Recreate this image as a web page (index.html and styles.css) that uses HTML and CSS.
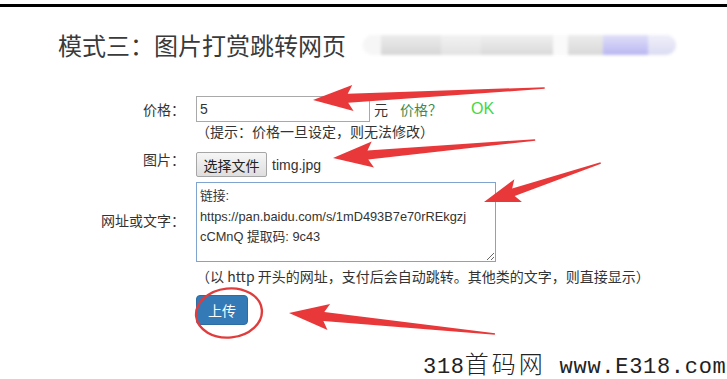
FILE: index.html
```html
<!DOCTYPE html>
<html lang="zh-CN">
<head>
    <meta charset="UTF-8">
    <meta name="viewport" content="width=device-width, initial-scale=1.0">
    <title>模式三：图片打赏跳转网页</title>
    <link rel="stylesheet" href="styles.css">
</head>
<body>

    <div class="topbar"></div>

    <div class="header">
        <h1>模式三：图片打赏跳转网页</h1>
        <div class="blurred">
            <span class="b1"></span><span class="b2"></span><span class="b3"></span><span class="b4"></span>
            <span class="b5"></span><span class="b6"></span><span class="b7"></span><span class="b8"></span>
        </div>
    </div>

    <div class="upload-form">
        <label class="lbl">价格：</label>
        <div class="field price-row">
            <input type="text" class="price-input" value="5">
            <span class="unit">元</span>
            <span class="price-check">价格？</span>
            <span class="ok">OK</span>
        </div>

        <div class="lbl"></div>
        <div class="field hint">（提示：价格一旦设定，则无法修改）</div>

        <label class="lbl">图片：</label>
        <div class="field file-row">
            <button class="file-btn">选择文件</button>
            <span class="file-name">timg.jpg</span>
        </div>

        <label class="lbl">网址或文字：</label>
        <div class="field text-row">
<textarea class="link-text">链接:
https://pan.baidu.com/s/1mD493B7e70rREkgzj
cCMnQ 提取码: 9c43</textarea>
        </div>

        <div class="lbl"></div>
        <div class="field hint hint-long">（以 http 开头的网址，支付后会自动跳转。其他类的文字，则直接显示）</div>

        <div class="lbl"></div>
        <div class="field submit-row">
            <button class="upload-btn">上传</button>
        </div>
    </div>

    <!-- annotation arrows drawn over the screenshot -->
    <svg class="marks" width="727" height="379" viewBox="0 0 727 379">
        <g fill="#e8383a">
            <polygon transform="translate(313 100) rotate(-2.96)" points="0,0 40,-13 35,-4.5 232,-0.8 232,0.8 35,4.5 40,13"/>
            <polygon transform="translate(333 158) rotate(-5.09)" points="0,0 40,-13 35,-4.5 203,-0.8 203,0.8 35,4.5 40,13"/>
            <polygon transform="translate(484 202) rotate(-18.43)" points="0,0 36,-12 31,-4 123,-0.8 123,0.8 31,4 36,12"/>
            <polygon transform="translate(289 313) rotate(5.82)" points="0,0 40,-13 35,-4.5 207,-0.8 207,0.8 35,4.5 40,13"/>
        </g>
        <ellipse cx="229" cy="313" rx="33" ry="24.5" transform="rotate(-6 229 313)" fill="none" stroke="#e03c3c" stroke-width="2.4"/>
    </svg>

    <div class="watermark">318<span class="wm-cjk">首码网</span> www.E318.com</div>

</body>
</html>
```

FILE: styles.css
```css
body {
    margin: 0;
    font-family: "Liberation Sans", "Noto Sans CJK SC", sans-serif;
    font-size: 14px;
    color: #333;
    background: #fff;
    position: relative;
    width: 727px;
    height: 379px;
    overflow: hidden;
    text-spacing-trim: space-all;
}
.topbar {
    margin-top: 4px;
    height: 3px;
    background: #000;
}
.header {
    display: flex;
    align-items: center;
    height: 75px;
    padding-left: 58px;
}
.header h1 {
    margin: 0;
    font-family: "Noto Sans CJK SC", sans-serif;
    font-weight: normal;
    font-size: 24px;
    line-height: 30px;
    color: #3a3a3a;
}
.blurred {
    display: flex;
    margin-left: 17px;
    height: 20px;
    width: 313px;
    border-radius: 10px;
    overflow: hidden;
    filter: blur(1.5px);
    background: #f2f2f2;
}
.blurred span {
    height: 100%;
}
.b1 { width: 18px; background: #f6f6f6; }
.b2 { width: 60px; background: linear-gradient(#ececec, #d6d6d6); }
.b3 { width: 40px; background: linear-gradient(#f2f2f2, #e2e2e2); }
.b4 { width: 72px; background: linear-gradient(#f0f0f0, #d9d9d9); }
.b5 { width: 15px; background: #fafafa; }
.b6 { width: 35px; background: linear-gradient(#ececec, #d8d8d8); }
.b7 { width: 45px; background: linear-gradient(#e0dff8, #b9b6f2); }
.b8 { width: 28px; background: linear-gradient(#efeffa, #dcdcf3); }

.upload-form {
    display: grid;
    grid-template-columns: 185px 1fr;
    column-gap: 11px;
    margin-top: 14px;
}
.lbl {
    text-align: right;
    align-self: center;
    font-family: "Noto Sans CJK SC", sans-serif;
    font-size: 14px;
    color: #333;
}
.field {
    display: flex;
    align-items: center;
}
.price-input {
    box-sizing: border-box;
    width: 174px;
    height: 26px;
    border: 1px solid #a9a9a9;
    padding: 0 3px;
    font-family: "Liberation Sans", sans-serif;
    font-size: 14px;
    color: #333;
    outline: none;
}
.unit {
    margin-left: 4px;
    font-family: "Noto Sans CJK SC", sans-serif;
}
.price-check {
    margin-left: 12px;
    font-family: "Noto Sans CJK SC", sans-serif;
    color: #3d8b4e;
}
.ok {
    margin-left: 29px;
    font-size: 16px;
    color: #45d845;
}
.hint {
    font-family: "Noto Sans CJK SC", sans-serif;
    line-height: 18px;
    color: #333;
}
.file-row {
    margin-top: 12px;
}
.file-btn {
    box-sizing: border-box;
    height: 25px;
    width: 71px;
    padding: 0;
    border: 1px solid #a6a6a6;
    border-radius: 2px;
    background: linear-gradient(#f6f6f6, #dedede);
    font-family: "Noto Sans CJK SC", sans-serif;
    font-size: 14px;
    color: #222;
}
.file-name {
    margin-left: 5px;
}
.text-row {
    margin-top: 5px;
}
.link-text {
    box-sizing: border-box;
    width: 300px;
    height: 80px;
    margin: 0;
    padding: 3px 3px;
    border: 1px solid #7fa4d0;
    font-family: "Liberation Sans", "Noto Sans CJK SC", sans-serif;
    font-size: 12.8px;
    line-height: 20.5px;
    color: #333;
    white-space: pre;
    overflow: hidden;
    outline: none;
}
.hint-long {
    margin-top: 4px;
    line-height: 20px;
}
.submit-row {
    margin-top: 9px;
}
.upload-btn {
    width: 52px;
    height: 30px;
    padding: 0;
    border: 1px solid #2e6da4;
    border-radius: 4px;
    background: #337ab7;
    color: #fff;
    font-family: "Noto Sans CJK SC", sans-serif;
    font-size: 14px;
}
.marks {
    position: absolute;
    top: 0;
    left: 0;
    pointer-events: none;
}
.watermark {
    position: absolute;
    left: 423px;
    top: 349px;
    font-family: "Liberation Mono", monospace;
    font-size: 22px;
    letter-spacing: 0.7px;
    line-height: 28px;
    color: #222;
    white-space: pre;
}
.wm-cjk {
    font-family: "Noto Sans CJK SC", sans-serif;
    font-size: 24px;
    letter-spacing: 3px;
    font-weight: 300;
}
```
